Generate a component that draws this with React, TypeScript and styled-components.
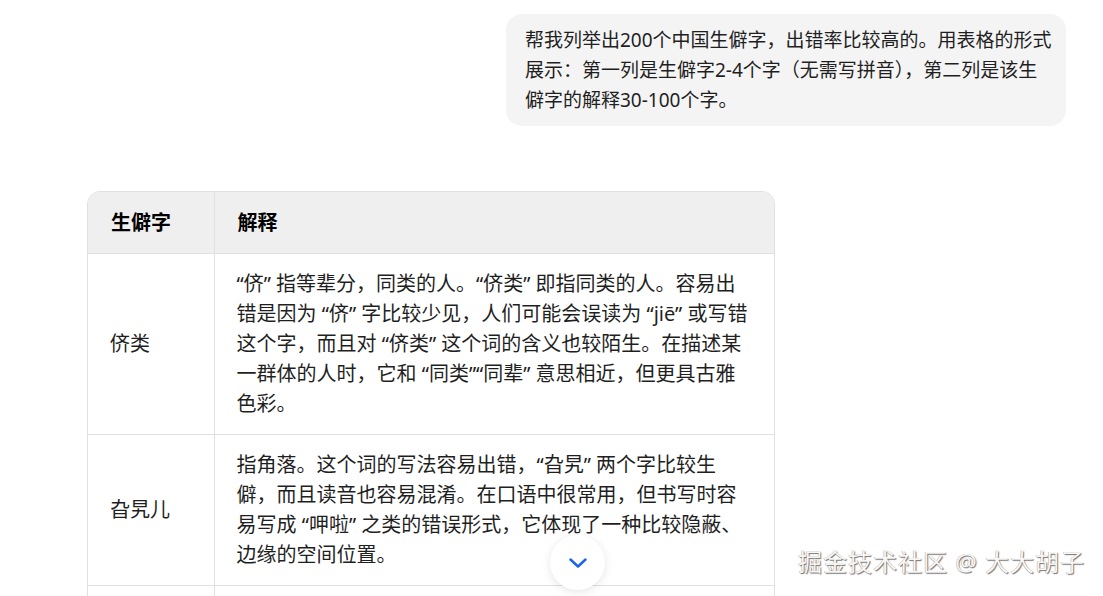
import React from "react";
import styled, { createGlobalStyle } from "styled-components";

const GlobalStyle = createGlobalStyle`
  html, body {
    margin: 0;
    padding: 0;
    background: #ffffff;
  }
  body {
    font-family: "Noto Sans", "Noto Sans CJK SC", sans-serif;
    color: #1f1f1f;
  }
`;

const Page = styled.div`
  position: relative;
  width: 1103px;
  height: 596px;
  overflow: hidden;
  box-sizing: border-box;
  padding: 14px 37px 0 87px;
`;

const Column = styled.div`
  position: relative;
  display: flex;
  flex-direction: column;
  height: 100%;
`;

const Bubble = styled.div`
  align-self: flex-end;
  width: 560px;
  box-sizing: border-box;
  padding: 11px 10px 11px 19px;
  background: #f4f4f4;
  border-radius: 16px;
  font-size: 19px;
  line-height: 30px;
  color: #1f1f1f;
`;

const Line = styled.span`
  display: block;
  white-space: nowrap;
`;

const TableWrap = styled.div`
  box-sizing: border-box;
  margin-top: 65px;
  width: 688px;
  border: 1px solid #e0e0e0;
  border-radius: 13px;
  overflow: hidden;
  flex-shrink: 0;
`;

const Table = styled.table`
  width: 100%;
  border-collapse: collapse;
  table-layout: fixed;
`;

const HeadCell = styled.th<{ $w?: number }>`
  box-sizing: border-box;
  width: ${(p) => (p.$w ? `${p.$w}px` : "auto")};
  background: #efefef;
  text-align: left;
  font-weight: 700;
  font-size: 20px;
  line-height: 30px;
  color: #000;
  padding: 16px 20px 15px 23px;
  border-bottom: 1px solid #e0e0e0;
  & + & {
    border-left: 1px solid #e0e0e0;
  }
`;

const Cell = styled.td`
  vertical-align: middle;
  font-size: 20px;
  line-height: 30px;
  color: #1f1f1f;
  padding: 15px 10px 15px 22px;
  border-bottom: 1px solid #e0e0e0;
  & + & {
    border-left: 1px solid #e0e0e0;
  }
`;

const ScrollButton = styled.button`
  position: absolute;
  left: 463px;
  bottom: 6px;
  width: 55px;
  height: 55px;
  border-radius: 50%;
  border: none;
  background: #ffffff;
  box-shadow: 0 2px 10px rgba(0, 0, 0, 0.1);
  display: flex;
  align-items: center;
  justify-content: center;
  padding: 0;
  cursor: pointer;
`;

const Watermark = styled.div`
  position: absolute;
  right: 18px;
  bottom: 18px;
  font-size: 24px;
  letter-spacing: 1px;
  color: #f7f7f7;
  text-shadow: 1px 1px 1px rgba(0, 0, 0, 0.55), -0.5px -0.5px 0.5px rgba(0, 0, 0, 0.35);
  white-space: nowrap;
`;

const prompt = [
  "帮我列举出200个中国生僻字，出错率比较高的。用表格的形式",
  "展示：第一列是生僻字2-4个字（无需写拼音），第二列是该生",
  "僻字的解释30-100个字。",
];

const rows: { word: string; lines: string[] }[] = [
  {
    word: "侪类",
    lines: [
      "“侪” 指等辈分，同类的人。“侪类” 即指同类的人。容易出",
      "错是因为 “侪” 字比较少见，人们可能会误读为 “jiē” 或写错",
      "这个字，而且对 “侪类” 这个词的含义也较陌生。在描述某",
      "一群体的人时，它和 “同类”“同辈” 意思相近，但更具古雅",
      "色彩。",
    ],
  },
  {
    word: "旮旯儿",
    lines: [
      "指角落。这个词的写法容易出错，“旮旯” 两个字比较生",
      "僻，而且读音也容易混淆。在口语中很常用，但书写时容",
      "易写成 “呷啦” 之类的错误形式，它体现了一种比较隐蔽、",
      "边缘的空间位置。",
    ],
  },
  { word: "", lines: [] },
];

export default function App() {
  return (
    <>
      <GlobalStyle />
      <Page>
        <Column>
          <Bubble>
            {prompt.map((l, i) => (
              <Line key={i}>{l}</Line>
            ))}
          </Bubble>
          <TableWrap>
            <Table>
              <thead>
                <tr>
                  <HeadCell $w={126}>生僻字</HeadCell>
                  <HeadCell>解释</HeadCell>
                </tr>
              </thead>
              <tbody>
                {rows.map((r, i) => (
                  <tr key={i}>
                    <Cell>{r.word || "\u00a0"}</Cell>
                    <Cell>
                      {r.lines.length
                        ? r.lines.map((l, j) => <Line key={j}>{l}</Line>)
                        : "\u00a0"}
                    </Cell>
                  </tr>
                ))}
              </tbody>
            </Table>
          </TableWrap>
          <ScrollButton aria-label="scroll down">
            <svg width="18" height="10" viewBox="0 0 18 10" fill="none">
              <path
                d="M1.5 1.5 L9 8.5 L16.5 1.5"
                stroke="#1d63e8"
                strokeWidth="2.4"
                strokeLinecap="round"
                strokeLinejoin="round"
              />
            </svg>
          </ScrollButton>
        </Column>
        <Watermark>掘金技术社区 @ 大大胡子</Watermark>
      </Page>
    </>
  );
}
